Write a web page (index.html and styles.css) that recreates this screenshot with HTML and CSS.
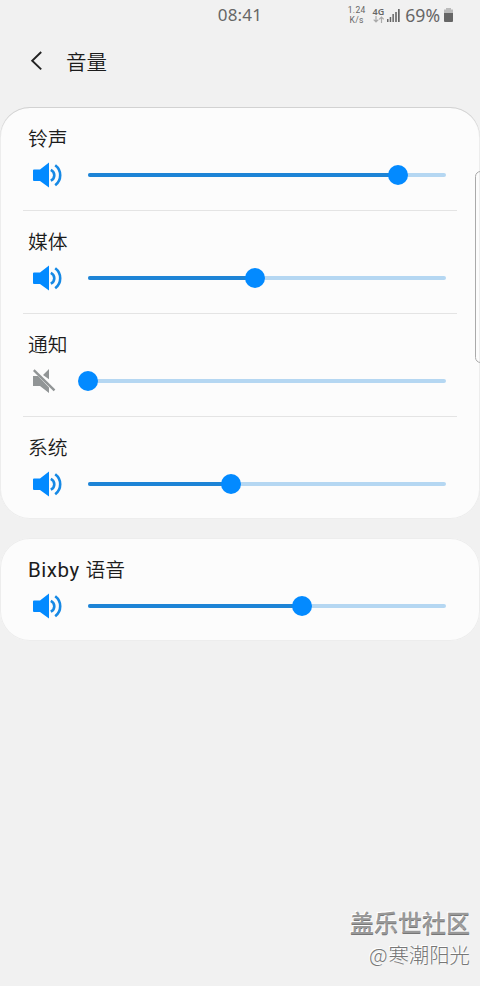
FILE: index.html
```html
<!DOCTYPE html>
<html lang="zh-CN">
<head>
<meta charset="utf-8">
<title>音量</title>
<link rel="stylesheet" href="styles.css">
</head>
<body>
<svg class="defs" width="0" height="0">
  <symbol id="speaker" viewBox="0 0 32 28">
    <path d="M2 8.5H8L17 1.5V26.5L8 20H2Q1 20 1 19V9.5Q1 8.5 2 8.5Z" fill="#038aff"/>
    <path d="M18.8 8.8Q22.3 10.5 22.3 14.2T18.8 19.6" fill="none" stroke="#1689e5" stroke-width="2.6"/>
    <path d="M23.2 4.2Q28.2 8 28.2 14.2T23.2 24.2" fill="none" stroke="#1689e5" stroke-width="2.6"/>
  </symbol>
  <symbol id="muted" viewBox="0 0 32 28">
    <path d="M17 2V12.3L11 8ZM1 9H6L17 20.5V26L8 19H1Z" fill="#919596"/>
    <path d="M1.8 3.2L22.5 23.3" fill="none" stroke="#919596" stroke-width="2.4"/>
  </symbol>
</svg>
<div class="screen">
  <header class="status">
    <span class="clock">08:41</span>
    <div class="indicators">
      <div class="speed"><span>1.24</span><span>K/s</span></div>
      <div class="network">
        <span>4G</span>
        <svg width="11" height="7" viewBox="0 0 11 7" fill="none" stroke="#aaa" stroke-width="1.2"><path d="M3 0V6M.7 3.7L3 6L5.3 3.7M8.5 7V1M6.2 3.3L8.5 1L10.8 3.3"/></svg>
      </div>
      <svg class="signal" width="13" height="13" viewBox="0 0 13 13" fill="#666"><path d="M0 10H1.5V13H0ZM2.7 8H4.2V13H2.7ZM5.4 5H6.9V13H5.4ZM8.2 3H9.8V13H8.2ZM11 0H12.7V13H11Z"/></svg>
      <span class="percent">69%</span>
      <svg class="battery" width="9" height="14" viewBox="0 0 9 14"><path d="M2 0H7V1.5H9V6H0V1.5H2Z" fill="#bbb"/><path d="M0 5H9V13Q9 14 8 14H1Q0 14 0 13Z" fill="#666"/></svg>
    </div>
  </header>
  <nav class="titlebar">
    <svg width="12" height="20" viewBox="0 0 12 20" fill="none" stroke="#222" stroke-width="1.9"><path d="M11.2 1L2.2 9.7L11.2 18.4"/></svg>
    <h1>音量</h1>
  </nav>
  <main>
    <section class="card">
      <div class="row"><h2>铃声</h2><div class="control"><svg class="icon"><use href="#speaker"/></svg><div class="track"><div class="fill" style="width:310px"></div><div class="thumb"></div></div></div></div>
      <div class="row"><h2>媒体</h2><div class="control"><svg class="icon"><use href="#speaker"/></svg><div class="track"><div class="fill" style="width:167px"></div><div class="thumb"></div></div></div></div>
      <div class="row"><h2>通知</h2><div class="control"><svg class="icon"><use href="#muted"/></svg><div class="track"><div class="fill" style="width:0px"></div><div class="thumb"></div></div></div></div>
      <div class="row"><h2>系统</h2><div class="control"><svg class="icon"><use href="#speaker"/></svg><div class="track"><div class="fill" style="width:143px"></div><div class="thumb"></div></div></div></div>
    </section>
    <section class="card">
      <div class="row"><h2><span class="latin">Bixby </span>语音</h2><div class="control"><svg class="icon"><use href="#speaker"/></svg><div class="track"><div class="fill" style="width:214px"></div><div class="thumb"></div></div></div></div>
    </section>
  </main>
  <footer class="credit"><strong>盖乐世社区</strong><span><span class="at">@</span>寒潮阳光</span></footer>
  <div class="edge-handle"></div>
</div>
</body>
</html>
```
FILE: styles.css
```css
* { box-sizing: border-box; }
body { margin: 0; background: #f1f1f1; color: #1c1c1c; font-family: Roboto, "Noto Sans CJK SC", sans-serif; }
.defs { position: absolute; }
.screen { position: relative; display: flex; flex-direction: column; width: 480px; height: 986px; overflow: hidden; }
.status { display: grid; grid-template-columns: 1fr auto 1fr; align-items: center; height: 30px; color: #666; font-family: "Noto Sans", sans-serif; }
.clock { grid-column: 2; font-size: 17px; line-height: 30px; letter-spacing: .2px; }
.indicators { display: flex; align-items: center; justify-content: flex-end; height: 30px; padding-right: 27px; }
.speed { display: flex; flex-direction: column; align-items: center; margin-right: 7px; font-family: Roboto, sans-serif; font-size: 8.5px; line-height: 10px; letter-spacing: .3px; }
.network { display: flex; flex-direction: column; align-items: center; margin-right: 3px; font-size: 9px; font-weight: 600; line-height: 9px; }
.network svg { margin-top: 0; }
.network span { margin-top: -1px; }
.signal { margin-right: 5px; }
.percent { margin-right: 4px; font-size: 17.6px; line-height: 30px; }
.titlebar { display: flex; align-items: center; height: 62px; padding-left: 30px; }
.titlebar h1 { margin: 0 0 0 24px; font-family: "Noto Sans CJK SC", sans-serif; font-size: 20.5px; font-weight: 350; line-height: 30px; }
main { display: flex; flex-direction: column; gap: 19px; padding-top: 15px; }
.card { border-radius: 30px; background: #fcfcfc; box-shadow: inset 0 0 0 1px #ededed; }
.card:first-child { box-shadow: inset 0 1px #d2d2d2, inset 0 0 0 1px #ededed; }
.row { height: 103px; margin: 0 23px; padding: 16px 11px 0 5px; }
.row + .row { border-top: 1px solid #e4e4e4; }
.row h2 { height: 30px; margin: 0; font-family: "Noto Sans CJK SC", sans-serif; font-size: 19.8px; font-weight: 350; line-height: 30px; }
.row .latin { font-family: Roboto, sans-serif; font-size: 20.5px; font-weight: 400; line-height: 1; letter-spacing: .55px; }
.control { display: flex; align-items: center; height: 28px; margin-top: 8px; padding-left: 4px; }
.row + .row h2 { margin-top: -1px; }
.icon { width: 32px; height: 28px; }
.track { display: flex; align-items: center; width: 358px; height: 4px; margin-left: 24px; border-radius: 2px; background: #b5d7f2; }
.fill { height: 4px; border-radius: 2px; background: #1d84d6; }
.thumb { flex: none; width: 20px; height: 20px; margin-left: -10px; border-radius: 50%; background: #038aff; }
.credit { display: flex; flex-direction: column; align-items: flex-end; margin-top: auto; padding: 0 10px 17px 0; color: #777; font-family: "Noto Sans CJK SC", sans-serif; text-shadow: -1px -1px #fff; }
.credit strong { font-size: 24px; font-weight: 500; line-height: 34px; color: #999; text-shadow: -1px -1px #fff, 0 1px #777; }
.credit > span { font-size: 20.4px; font-weight: 300; line-height: 30px; }
.at { letter-spacing: .8px; }
.edge-handle { position: absolute; top: 171px; right: -6px; width: 11px; height: 192px; border: 1px solid #aaa; border-radius: 6px; }
```
